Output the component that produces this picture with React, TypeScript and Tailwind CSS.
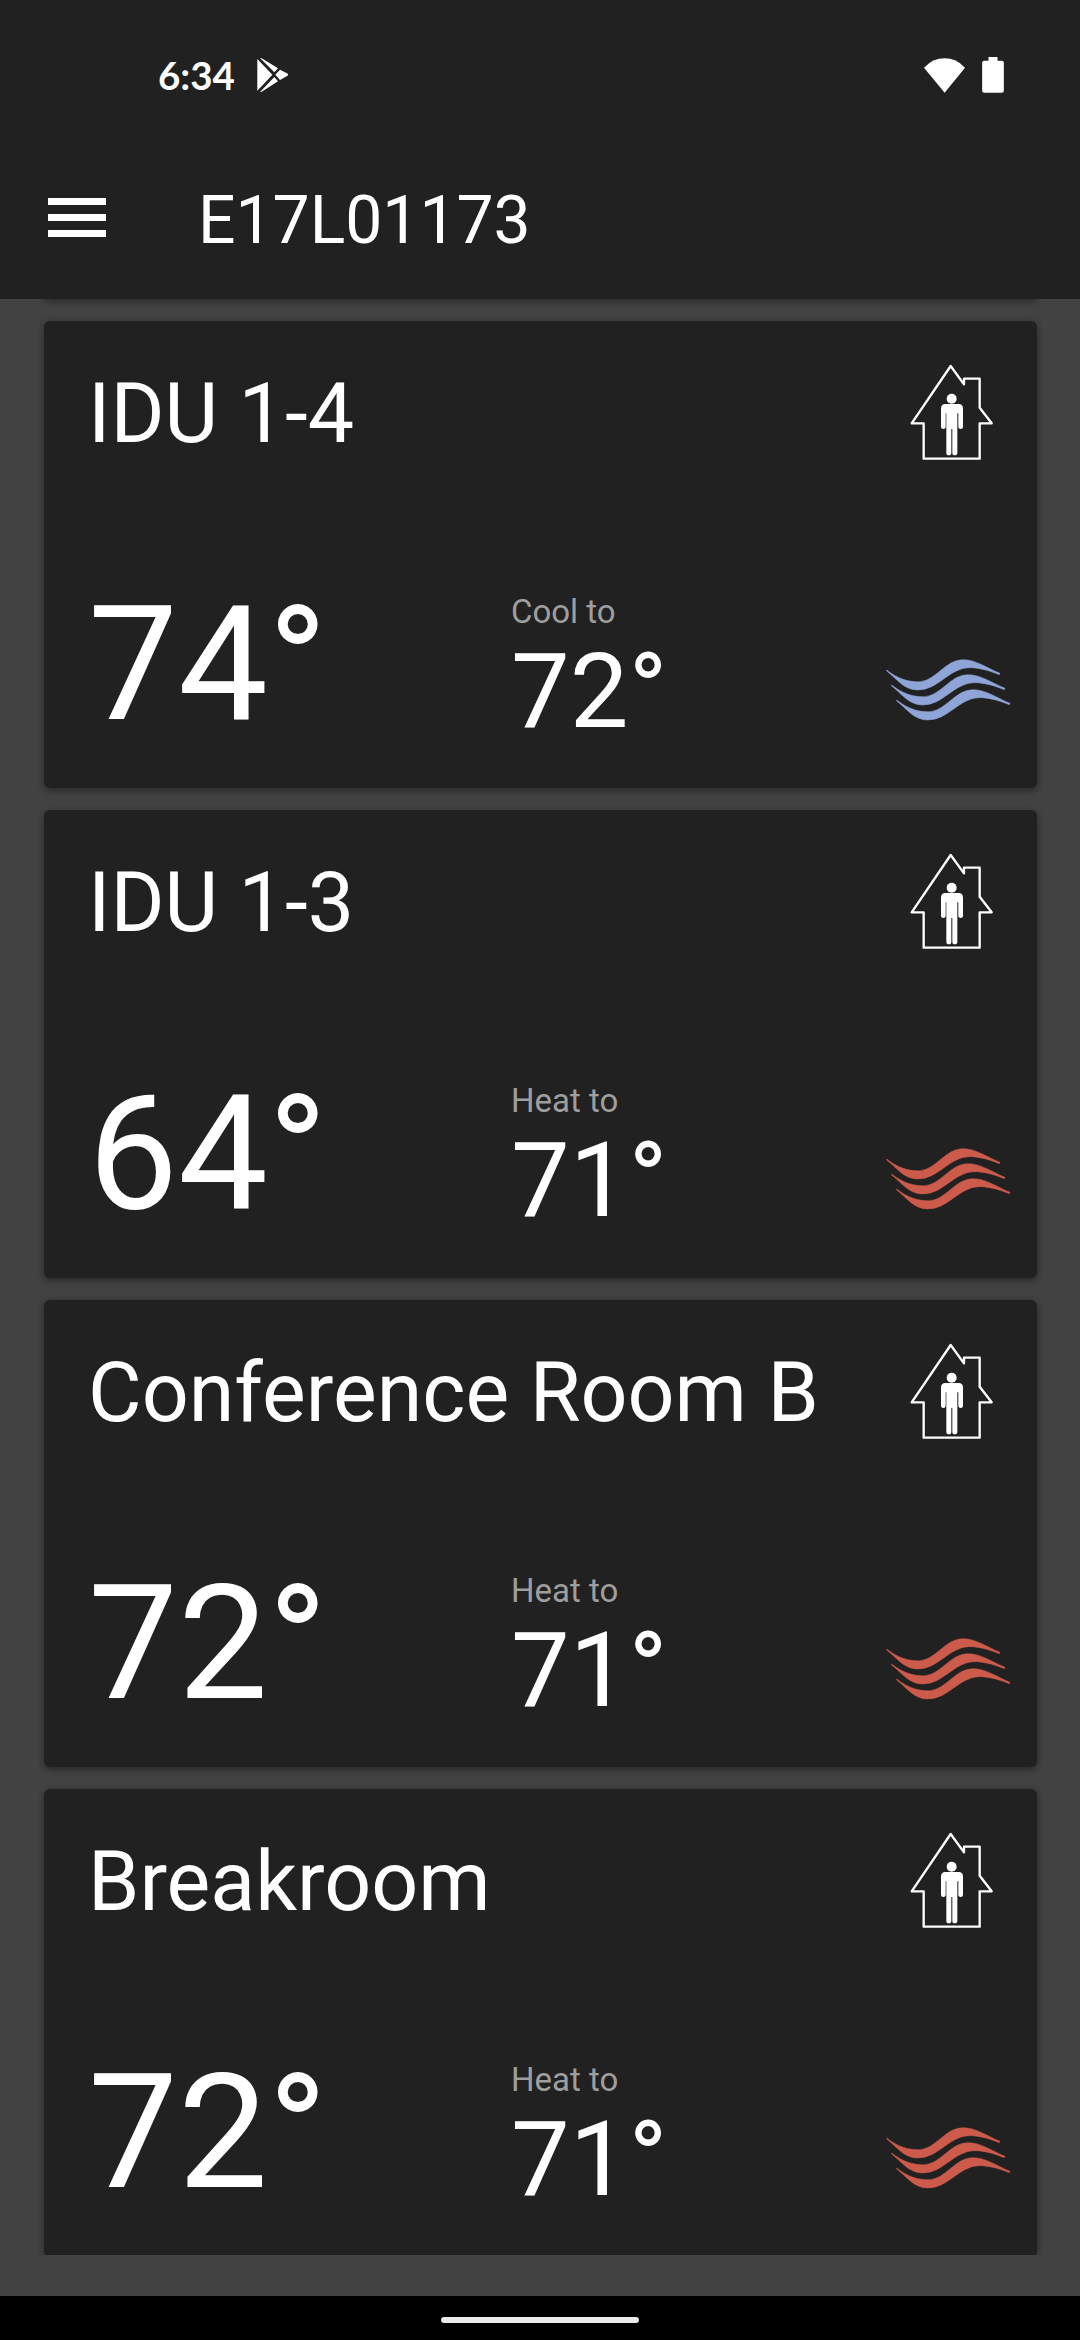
import React from 'react';

type Mode = 'cool' | 'heat';

interface Zone {
  name: string;
  current: number;
  target: number;
  mode: Mode;
}

const zones: Zone[] = [
  { name: 'IDU 1-4', current: 74, target: 72, mode: 'cool' },
  { name: 'IDU 1-3', current: 64, target: 71, mode: 'heat' },
  { name: 'Conference Room B', current: 72, target: 71, mode: 'heat' },
  { name: 'Breakroom', current: 72, target: 71, mode: 'heat' },
];

const PlayIcon = () => (
  <svg className="h-[34px] w-8" viewBox="52 56 96 102" fill="#fff">
    <path d="M53 59 L98 106 L53 154 Z" />
    <path d="M61 56 L66 57 L115 87 L104 99 Z" />
    <path d="M61 158 L66 157 L115 126 L104 113 Z" />
    <path d="M121 91 L142 102 Q149 106 142 110 L121 122 L107 106 Z" />
  </svg>
);

const WifiIcon = () => (
  <svg className="h-[35px] w-[41px]" viewBox="132 84 123 105" fill="#fff">
    <path d="M194 188 L132 113 Q158 85 194 85 Q229 85 255 113 Z" />
  </svg>
);

const BatteryIcon = () => (
  <svg className="h-9 w-[22px]" viewBox="305 81 65 108" fill="#fff">
    <path d="M324 81 H351 V92 H364 Q370 92 370 98 V182 Q370 188 364 188 H311 Q305 188 305 182 V98 Q305 92 311 92 H324 Z" />
  </svg>
);

const OccupiedIcon = () => (
  <svg className="h-[98px] w-[84px]" viewBox="60 42 252 294">
    <path
      d="M182 48 L222 103 V86 H269 V173 L305 220 H269 V326 H101 V220 H65 Z"
      fill="none"
      stroke="#fff"
      strokeWidth="7"
      strokeLinejoin="round"
    />
    <circle cx="185" cy="146" r="15" fill="#fff" />
    <path
      d="M166 162 H206 Q219 162 219 176 V231 Q219 237 212 237 Q205 237 205 231 V190 H202 V308 Q202 316 194 316 Q187 316 187 308 V237 H184 V308 Q184 316 177 316 Q169 316 169 308 V190 H167 V231 Q167 237 160 237 Q153 237 153 231 V176 Q153 162 166 162 Z"
      fill="#fff"
    />
  </svg>
);

const wave =
  'M50 91 C85 118 115 127 148 126 C197 124 226 60 278 60 C318 60 345 82 390 101 L388 105 C350 90 325 84 298 84 C236 85 207 151 142 151 C102 151 79 116 50 94 Z';

const AirflowIcon = ({ mode }: { mode: Mode }) => {
  const color = mode === 'cool' ? '#8fa5d8' : '#cd5b4b';

  return (
    <svg className="h-[63px] w-[126px]" viewBox="45 55 378 189" fill={color} stroke={color} strokeWidth="1.5">
      <path d={wave} />
      <path d={wave} transform="translate(15 45)" />
      <path d={wave} transform="translate(30 90)" />
    </svg>
  );
};

const cardStyle = 'shrink-0 bg-[#212121] shadow-[0_3px_6px_rgba(0,0,0,0.3),0_0_6px_rgba(0,0,0,0.14)]';

const ZoneCard = ({ zone }: { zone: Zone }) => (
  <div className={`${cardStyle} flex h-[467.4px] flex-col rounded-md pl-11`}>
    <div className="flex h-[262px] items-start justify-between pr-[43px]">
      <h2 className="pt-[52px] text-[82.5px] leading-none">{zone.name}</h2>
      <div className="pt-[43px]">
        <OccupiedIcon />
      </div>
    </div>
    <div className="flex items-start">
      <div className="w-[423px] pt-0.5 text-[160px] leading-none">{zone.current}°</div>
      <div className="w-[374px] pt-3">
        <p className="text-[33px] leading-none text-[#9e9e9e]">{zone.mode === 'cool' ? 'Cool to' : 'Heat to'}</p>
        <p className="pt-3 text-[104.5px] leading-none">{zone.target}°</p>
      </div>
      <div className="pt-[75px]">
        <AirflowIcon mode={zone.mode} />
      </div>
    </div>
  </div>
);

export default function App() {
  return (
    <div className="flex h-[2340px] w-[1080px] flex-col overflow-hidden bg-[#424242] font-[Roboto,sans-serif] text-white">
      <header className="relative z-10 h-[299px] shrink-0 bg-[#212121]">
        {/* Status bar */}
        <div className="flex h-[150px] items-center justify-between pr-[76px] pl-[158px]">
          <div className="flex items-center gap-[22px]">
            <span className="font-[Lato,sans-serif] text-[38.5px] leading-none font-bold">6:34</span>
            <PlayIcon />
          </div>
          <div className="flex items-center gap-[17px]">
            <WifiIcon />
            <BatteryIcon />
          </div>
        </div>
        {/* Toolbar */}
        <div className="flex h-[135px] items-center pl-12">
          <button className="flex w-[58px] flex-col gap-[9px]" aria-label="Menu">
            <span className="h-[7px] w-full bg-white" />
            <span className="h-[7px] w-full bg-white" />
            <span className="h-[7px] w-full bg-white" />
          </button>
          <h1 className="ml-[92px] pt-1.5 text-[66px] leading-none">E17L01173</h1>
        </div>
      </header>

      <main className="flex h-[1956px] shrink-0 flex-col gap-[22px] overflow-hidden pr-[43px] pl-11">
        {/* Bottom edge of the card scrolled under the toolbar */}
        <div className={`${cardStyle} -mt-10 h-10 rounded-md`} />
        {zones.map((zone) => (
          <ZoneCard key={zone.name} zone={zone} />
        ))}
      </main>

      <footer className="mt-auto flex h-11 shrink-0 justify-center bg-black pt-[21px]">
        <div className="h-1.5 w-[198px] rounded-full bg-[#ebebeb]" />
      </footer>
    </div>
  );
}
